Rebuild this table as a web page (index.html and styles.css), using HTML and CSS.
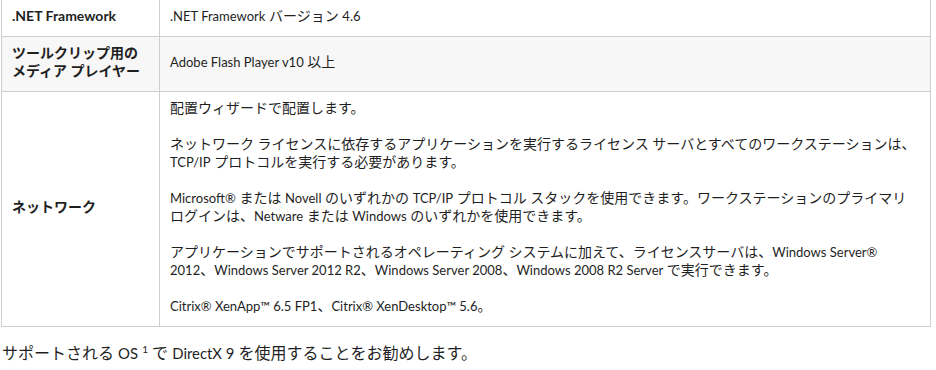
FILE: index.html
```html
<!DOCTYPE html>
<html lang="ja">
<head>
<meta charset="utf-8">
<title>システム要件</title>
<link rel="stylesheet" href="styles.css">
</head>
<body>
<div class="page">
  <table class="req">
    <colgroup>
      <col class="c-label">
      <col class="c-value">
    </colgroup>
    <tbody>
      <tr>
        <th class="label">.NET Framework</th>
        <td class="value"><span class="en">.NET Framework</span> バージョン <span class="en">4.6</span></td>
      </tr>
      <tr class="alt">
        <th class="label">ツールクリップ用の<br>メディア プレイヤー</th>
        <td class="value"><span class="en">Adobe Flash Player v10</span> 以上</td>
      </tr>
      <tr>
        <th class="label">ネットワーク</th>
        <td class="value">
          <p>配置ウィザードで配置します。</p>
          <p>ネットワーク ライセンスに依存するアプリケーションを実行するライセンス サーバとすべてのワークステーションは、<br><span class="en">TCP/IP</span> プロトコルを実行する必要があります。</p>
          <p><span class="en">Microsoft®</span> または <span class="en">Novell</span> のいずれかの <span class="en">TCP/IP</span> プロトコル スタックを使用できます。ワークステーションのプライマリ<br>ログインは、<span class="en">Netware</span> または <span class="en">Windows</span> のいずれかを使用できます。</p>
          <p>アプリケーションでサポートされるオペレーティング システムに加えて、ライセンスサーバは、<span class="en">Windows Server®</span><br><span class="en">2012</span>、<span class="en">Windows Server 2012 R2</span>、<span class="en">Windows Server 2008</span>、<span class="en">Windows 2008 R2 Server</span> で実行できます。</p>
          <p><span class="en">Citrix® XenApp™ 6.5 FP1</span>、<span class="en">Citrix® XenDesktop™ 5.6</span>。</p>
        </td>
      </tr>
    </tbody>
  </table>
  <p class="note">サポートされる <span class="en">OS</span> <sup class="fn">1</sup> で <span class="en">DirectX 9</span> を使用することをお勧めします。</p>
</div>
</body>
</html>
```

FILE: styles.css
```css
html, body {
  margin: 0;
  padding: 0;
  background: #ffffff;
}

body {
  font-family: "Lato", "Noto Sans CJK JP", sans-serif;
  color: #1f1f1f;
}

.page {
  padding: 0 4px 0 1px;
}

.en {
  font-size: 0.93em;
}

.req {
  width: 930px;
  border-collapse: collapse;
  table-layout: fixed;
  font-size: 14px;
  line-height: 18px;
  border-bottom: 1px solid #cfcfcf;
  border-left: 1px solid #cfcfcf;
  border-right: 1px solid #cfcfcf;
}

.c-label {
  width: 158px;
}

.req tr + tr th,
.req tr + tr td {
  border-top: 1px solid #cfcfcf;
}

.req th,
.req td {
  padding: 7px 10px 11px;
  vertical-align: middle;
  text-align: left;
}

.req th {
  font-weight: bold;
  border-right: 1px solid #cfcfcf;
}

.alt th,
.alt td {
  background: #f7f7f7;
}

.value p {
  margin: 0 0 18px;
}

.value p:last-child {
  margin-bottom: 0;
}

.note {
  margin: 14px 0 0;
  font-size: 16px;
  line-height: 24px;
  padding-left: 1px;
}

.fn {
  font-size: 10px;
  line-height: 0;
  vertical-align: 6px;
}
```
